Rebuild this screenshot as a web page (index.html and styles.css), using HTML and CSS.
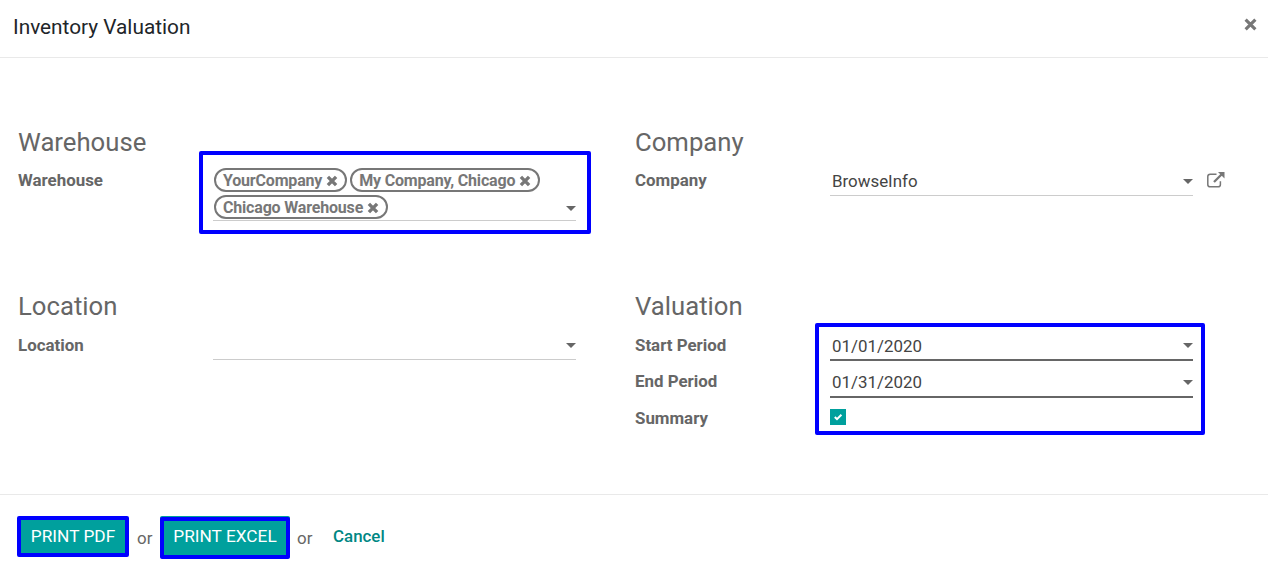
FILE: index.html
```html
<!DOCTYPE html>
<html lang="en">
<head>
<meta charset="utf-8">
<title>Inventory Valuation</title>
<link rel="stylesheet" href="styles.css">
</head>
<body>
<div class="modal">
  <header class="modal-header">
    <h1 class="title">Inventory Valuation</h1>
    <svg class="close" viewBox="0 0 12 12"><path d="M1.5 1.5 L10.5 10.5 M10.5 1.5 L1.5 10.5"/></svg>
  </header>
  <main class="modal-body">
    <section class="group">
      <h2 class="heading">Warehouse</h2>
      <div class="row">
        <label class="label">Warehouse</label>
        <div class="field tags marked-tags">
          <span class="tag"><span>YourCompany</span><svg class="x" viewBox="0 0 12 12"><path d="M1.9 1.9 L10.1 10.1 M10.1 1.9 L1.9 10.1"/></svg></span>
          <span class="tag"><span>My Company, Chicago</span><svg class="x" viewBox="0 0 12 12"><path d="M1.9 1.9 L10.1 10.1 M10.1 1.9 L1.9 10.1"/></svg></span>
          <span class="tag"><span>Chicago Warehouse</span><svg class="x" viewBox="0 0 12 12"><path d="M1.9 1.9 L10.1 10.1 M10.1 1.9 L1.9 10.1"/></svg></span>
          <i class="caret"></i>
        </div>
      </div>
    </section>
    <section class="group">
      <h2 class="heading">Company</h2>
      <div class="row">
        <label class="label">Company</label>
        <div class="field"><span class="value">BrowseInfo</span><i class="caret"></i></div>
        <svg class="external" viewBox="0 0 18 16"><path class="frame" d="M9.5 2.2 H3.2 Q0.8 2.2 0.8 4.6 V12.4 Q0.8 14.8 3.2 14.8 H11 Q13.4 14.8 13.4 12.4 V9.2"/><path class="shaft" d="M7 10 L14.5 2.5"/><path class="head" d="M11 0 H17.5 V6.5 Z"/></svg>
      </div>
    </section>
    <section class="group lower">
      <h2 class="heading">Location</h2>
      <div class="row">
        <label class="label">Location</label>
        <div class="field"><i class="caret"></i></div>
      </div>
    </section>
    <section class="group lower">
      <h2 class="heading">Valuation</h2>
      <div class="period marked-period">
        <div class="row">
          <label class="label">Start Period</label>
          <div class="field required"><span class="value">01/01/2020</span><i class="caret"></i></div>
        </div>
        <div class="row end">
          <label class="label">End Period</label>
          <div class="field required"><span class="value">01/31/2020</span><i class="caret"></i></div>
        </div>
        <div class="row summary">
          <label class="label">Summary</label>
          <span class="checkbox"><svg viewBox="0 0 16 16"><path d="M4.8 8 L7 10.2 L11.4 5.8"/></svg></span>
        </div>
      </div>
    </section>
  </main>
  <footer class="modal-footer">
    <button class="button pdf">PRINT PDF</button>
    <span class="or">or</span>
    <button class="button excel">PRINT EXCEL</button>
    <span class="or">or</span>
    <a class="cancel">Cancel</a>
  </footer>
</div>
</body>
</html>
```
FILE: styles.css
```css
*, *::after { box-sizing: border-box; }
body { margin: 0; background: #fff; color: #666; font: 16.9px/24px Roboto, sans-serif; }
.modal { height: 577px; display: flex; flex-direction: column; overflow: hidden; }
.modal-header { height: 58px; padding: 0 11px 4px 13px; display: flex; align-items: center; justify-content: space-between; border-bottom: 1px solid #e9e9e9; }
.title { margin: 0; font-size: 20.8px; font-weight: 400; color: #212529; }
.close { width: 13px; height: 13px; margin-top: -5px; }
.close path { stroke: #777; stroke-width: 2.9; fill: none; }
.modal-body { height: 436px; padding: 68px 0 0 18px; display: grid; grid-template-columns: 617px 1fr; grid-template-rows: 164px 1fr; align-items: start; }
.heading { margin: 0 0 10px; height: 32px; line-height: 32px; font-size: 25.7px; font-weight: 400; color: #666; }
.row { display: flex; align-items: flex-start; }
.label { width: 195px; flex: none; font-weight: 700; font-size: 16.9px; color: #666; }
.lower .label { padding-top: 1px; }
.field { position: relative; width: 363px; height: 28px; border-bottom: 1px solid #ccc; }
.value { display: block; padding: 1px 2px 0; height: 26px; color: #444; }
.lower .value { padding-top: 2px; }
.caret { position: absolute; right: 0; bottom: 11px; width: 10px; height: 5px; background: #666; clip-path: polygon(0 0, 100% 0, 50% 100%); }
.required { height: 29px; border-bottom: 2px solid #666; }
.tags { height: 53px; display: flex; flex-wrap: wrap; align-content: flex-start; gap: 3px; padding-left: 1px; }
.tag { height: 24px; border: 2px solid #777; border-radius: 12px; padding: 1px 7px 0 7px; display: flex; align-items: center; gap: 4px; line-height: 20px; font-size: 16px; font-weight: 700; letter-spacing: -.18px; color: #777; white-space: nowrap; }
.x { width: 12px; height: 12px; flex: none; }
.x path { stroke: #777; stroke-width: 3.4; fill: none; }
.tags .caret { bottom: 9px; }
.marked-tags::after { content: ""; position: absolute; left: -14px; right: -15px; top: -17px; bottom: -14px; border: 4px solid #00f; border-radius: 2px; }
.external { width: 18px; height: 16px; margin: 4px 0 0 14px; }
.frame { fill: none; stroke: #777; stroke-width: 1.5; }
.shaft { fill: none; stroke: #777; stroke-width: 2.3; }
.head { fill: #777; }
.period { position: relative; }
.end { margin-top: 7px; }
.end .required { height: 30px; }
.summary { margin-top: 7px; }
.marked-period::after { content: ""; position: absolute; left: 180px; top: -9px; width: 390px; height: 112px; border: 4px solid #00f; border-radius: 2px; }
.checkbox { width: 16px; height: 16px; margin-top: 4px; background: #00a09d; }
.checkbox svg { display: block; }
.checkbox path { fill: none; stroke: #fff; stroke-width: 2; }
.modal-footer { height: 83px; padding: 21px 0 0 17px; border-top: 1px solid #e9e9e9; display: flex; align-items: flex-start; }
.button { font: 17.3px/20px Roboto, sans-serif; color: #fff; background: #00a09d; border: 4px solid #00f; border-radius: 2px; padding: 0 0 2px; white-space: nowrap; }
.pdf { width: 112px; height: 41px; }
.excel { width: 130px; height: 42px; margin-top: 1px; padding-bottom: 5px; box-shadow: 0 -1px #00a09d; }
.or { width: 31px; padding: 10px 0 0 8px; }
.excel + .or { width: 43px; padding-left: 7px; }
.cancel { padding-top: 8px; font-weight: 500; color: #008784; }
```
